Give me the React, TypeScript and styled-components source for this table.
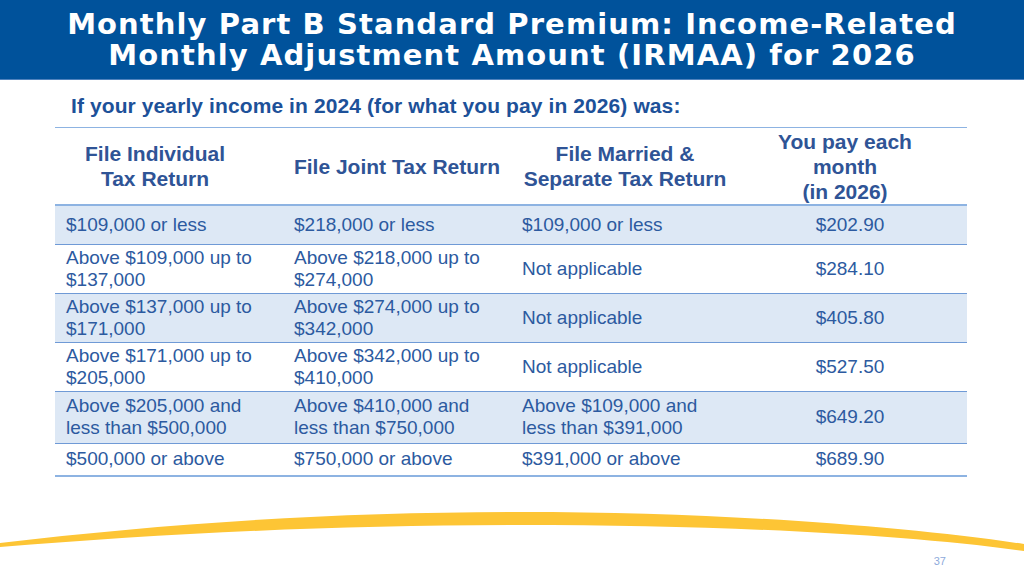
import React from "react";
import styled, { createGlobalStyle } from "styled-components";

const GlobalStyle = createGlobalStyle`
  html, body {
    margin: 0;
    padding: 0;
    background: #ffffff;
  }
`;

const Slide = styled.div`
  width: 1024px;
  height: 576px;
  overflow: hidden;
  display: flex;
  flex-direction: column;
  background: #ffffff;
  font-family: "Liberation Sans", Arial, sans-serif;
`;

const TitleBand = styled.header`
  height: 80px;
  flex-shrink: 0;
  background: #00529b;
  border-bottom: 1px solid #4f82bd;
  box-sizing: border-box;
  display: flex;
  align-items: center;
  justify-content: center;
`;

const Title = styled.h1`
  margin: 0;
  color: #ffffff;
  font-family: "DejaVu Sans", Verdana, sans-serif;
  font-weight: bold;
  font-size: 29px;
  line-height: 31px;
  text-align: center;
  letter-spacing: 1.1px;
`;

const Body = styled.main`
  padding: 13px 57px 0 55px;
`;

const Lead = styled.p`
  margin: 0 0 0 16px;
  color: #1d5199;
  font-weight: bold;
  font-size: 21px;
  line-height: 26px;
  height: 34px;
  letter-spacing: 0.1px;
`;

const Table = styled.table`
  width: 912px;
  border-collapse: collapse;
  table-layout: fixed;
  border-top: 1px solid #8db3e2;
  border-bottom: 2px solid #8db3e2;
`;

const HeadCell = styled.th<{ $shift?: number }>`
  height: 76px;
  padding: 0 ${(p) => 8 + (p.$shift ?? 0)}px 0 8px;
  color: #2f5496;
  font-weight: bold;
  font-size: 21px;
  line-height: 25px;
  text-align: center;
  vertical-align: middle;
  border-bottom: 2px solid #8db3e2;
`;

const Row = styled.tr<{ $shaded: boolean; $height: number }>`
  background: ${(p) => (p.$shaded ? "#dde8f5" : "#ffffff")};
  height: ${(p) => p.$height}px;
  border-bottom: 1px solid #6f9ad6;

  &:last-child {
    border-bottom: none;
  }
`;

const Cell = styled.td<{ $center?: boolean }>`
  padding: 0 ${(p) => (p.$center ? 17 : 11)}px 0 11px;
  color: #2c5aa0;
  font-size: 19px;
  line-height: 22px;
  text-align: ${(p) => (p.$center ? "center" : "left")};
  vertical-align: middle;
`;

const Footer = styled.footer`
  margin-top: auto;
  position: relative;
  height: 72px;
`;

const Swoosh = styled.svg`
  display: block;
  width: 1024px;
  height: 72px;
`;

const PageNumber = styled.span`
  position: absolute;
  right: 78px;
  bottom: 9px;
  color: #8eaadb;
  font-size: 11px;
`;

const rows = [
  { cells: ["$109,000 or less", "$218,000 or less", "$109,000 or less"], pay: "$202.90", h: 39 },
  { cells: ["Above $109,000 up to $137,000", "Above $218,000 up to $274,000", "Not applicable"], pay: "$284.10", h: 49 },
  { cells: ["Above $137,000 up to $171,000", "Above $274,000 up to $342,000", "Not applicable"], pay: "$405.80", h: 49 },
  { cells: ["Above $171,000 up to $205,000", "Above $342,000 up to $410,000", "Not applicable"], pay: "$527.50", h: 49 },
  {
    cells: ["Above $205,000 and less than $500,000", "Above $410,000 and less than $750,000", "Above $109,000 and less than $391,000"],
    pay: "$649.20",
    h: 52,
  },
  { cells: ["$500,000 or above", "$750,000 or above", "$391,000 or above"], pay: "$689.90", h: 33 },
];

export default function App() {
  return (
    <>
      <GlobalStyle />
      <Slide>
        <TitleBand>
          <Title>
            Monthly Part B Standard Premium: Income-Related
            <br />
            Monthly Adjustment Amount (IRMAA) for 2026
          </Title>
        </TitleBand>

        <Body>
          <Lead>If your yearly income in 2024 (for what you pay in 2026) was:</Lead>
          <Table>
            <colgroup>
              <col style={{ width: 228 }} />
              <col style={{ width: 228 }} />
              <col style={{ width: 228 }} />
              <col style={{ width: 228 }} />
            </colgroup>
            <thead>
              <tr>
                <HeadCell $shift={28}>
                  File Individual
                  <br />
                  Tax Return
                </HeadCell>
                <HeadCell>File Joint Tax Return</HeadCell>
                <HeadCell>
                  File Married &amp;
                  <br />
                  Separate Tax Return
                </HeadCell>
                <HeadCell $shift={16}>
                  You pay each
                  <br />
                  month
                  <br />
                  (in 2026)
                </HeadCell>
              </tr>
            </thead>
            <tbody>
              {rows.map((r, i) => (
                <Row key={i} $shaded={i % 2 === 0} $height={r.h}>
                  {r.cells.map((c, j) => (
                    <Cell key={j}>{c}</Cell>
                  ))}
                  <Cell $center>{r.pay}</Cell>
                </Row>
              ))}
            </tbody>
          </Table>
        </Body>

        <Footer>
          <Swoosh viewBox="0 0 1024 72" preserveAspectRatio="none">
            <path
              d="M0 39 C 160 20, 330 8, 520 8 C 720 8, 900 22, 1024 40 L 1024 47 C 900 30, 720 21, 520 21 C 330 21, 160 30, 0 43 Z"
              fill="#fdc535"
            />
          </Swoosh>
          <PageNumber>37</PageNumber>
        </Footer>
      </Slide>
    </>
  );
}
